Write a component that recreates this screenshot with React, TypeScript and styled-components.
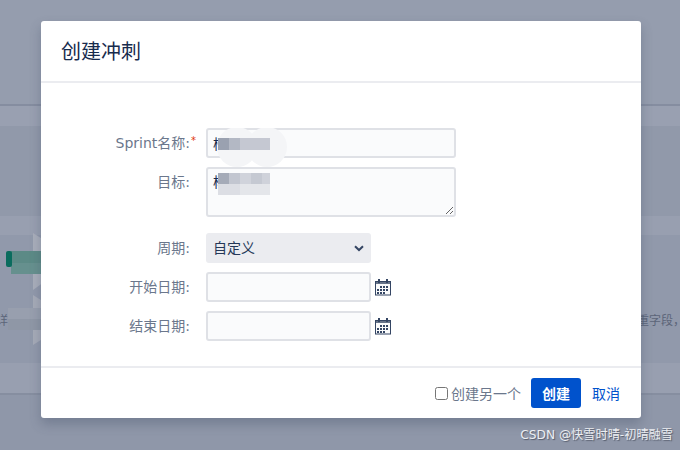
import React from "react";
import styled, { createGlobalStyle } from "styled-components";

const FONT = `"DejaVu Sans", "Noto Sans CJK SC", sans-serif`;

const Global = createGlobalStyle`
  html, body { margin: 0; padding: 0; width: 680px; height: 450px; overflow: hidden; background: #9199ab; }
  * { box-sizing: border-box; }
`;

const Page = styled.div`
  position: relative;
  width: 680px;
  height: 450px;
  overflow: hidden;
  font-family: ${FONT};
`;

const Backdrop = styled.div`
  display: flex;
  flex-direction: column;
  width: 100%;
  height: 100%;
`;

const Band = styled.div<{ $h: number; $tone: string; $line?: string }>`
  height: ${(p) => p.$h}px;
  flex: none;
  background: ${(p) => p.$tone};
  ${(p) => (p.$line ? `border-bottom: 2px solid ${p.$line};` : "")}
`;

const TextBand = styled(Band)`
  display: flex;
  justify-content: space-between;
  padding-top: 78px;
  font-size: 12px;
  line-height: 16px;
  color: #5c6579;
`;

const ClippedLeft = styled.span`
  margin-left: -4px;
`;

const ClippedRight = styled.span`
  margin-right: -5px;
`;

const Smudges = styled.svg`
  position: absolute;
  left: 0;
  top: 230px;
`;

const Modal = styled.div`
  position: absolute;
  left: 41px;
  top: 21px;
  width: 600px;
  height: 397px;
  display: flex;
  flex-direction: column;
  background: #fff;
  border-radius: 3px;
  box-shadow: 0 6px 12px rgba(60, 70, 95, 0.32);
`;

const Header = styled.header`
  height: 62px;
  flex: none;
  display: flex;
  align-items: center;
  padding: 0 20px;
  border-bottom: 2px solid #ebecf0;
  margin: 0;
`;

const Title = styled.h2`
  margin: 0;
  font-size: 20px;
  font-weight: 400;
  color: #172b4d;
  line-height: 28px;
  position: relative;
  top: 1px;
`;

const Form = styled.div`
  flex: 1;
  display: flex;
  flex-direction: column;
  padding-top: 45px;
`;

const Row = styled.div<{ $after: number }>`
  display: flex;
  align-items: flex-start;
  margin-bottom: ${(p) => p.$after}px;
`;

const Label = styled.label`
  width: 149px;
  flex: none;
  margin-right: 16px;
  text-align: right;
  font-size: 14px;
  line-height: 30px;
  color: #6b778c;
  position: relative;
`;

const Star = styled.span`
  position: absolute;
  left: 150px;
  top: -2px;
  font-size: 10px;
  color: #de350b;
`;

const fieldBase = `
  border: 2px solid #dfe1e6;
  border-radius: 3px;
  background: #fafbfc;
  font-family: ${FONT};
  font-size: 14px;
  color: #172b4d;
  padding: 0 5px;
  outline: none;
`;

const TextInput = styled.input<{ $w: number }>`
  ${fieldBase}
  width: ${(p) => p.$w}px;
  height: 30px;
`;

const TextArea = styled.textarea`
  ${fieldBase}
  width: 250px;
  height: 50px;
  padding-top: 3px;
  display: block;
  line-height: 20px;
`;

const SelectWrap = styled.div`
  position: relative;
  width: 165px;
  height: 30px;
`;

const Select = styled.select`
  appearance: none;
  display: block;
  width: 100%;
  height: 100%;
  border: none;
  border-radius: 3px;
  background-color: #ebecf0;
  font-family: ${FONT};
  font-size: 14px;
  color: #253858;
  padding: 0 7px;
`;

const Chevron = styled.svg`
  position: absolute;
  left: 148px;
  top: 12px;
  pointer-events: none;
`;

const DateIcon = styled.svg`
  flex: none;
  margin: 7px 0 0 4px;
`;

const Censor = styled.svg`
  position: absolute;
  left: 172px;
  top: 107px;
  pointer-events: none;
`;

const Footer = styled.footer`
  height: 52px;
  flex: none;
  border-top: 2px solid #ebecf0;
  display: flex;
  align-items: center;
  justify-content: flex-end;
  padding: 0 21px 0 0;
`;

const CheckLabel = styled.label`
  display: flex;
  align-items: center;
  font-size: 14px;
  color: #6b778c;
  margin-right: 10px;
`;

const Check = styled.input`
  width: 13px;
  height: 13px;
  margin: 0 3px 0 0;
`;

const Primary = styled.button`
  width: 50px;
  height: 30px;
  border: none;
  border-radius: 3px;
  background: #0052cc;
  color: #fff;
  font-family: ${FONT};
  font-size: 14px;
  font-weight: 700;
  padding: 0;
`;

const LinkButton = styled.a`
  margin-left: 11px;
  font-size: 14px;
  color: #0052cc;
  text-decoration: none;
`;

const Watermark = styled.div`
  position: absolute;
  right: 7px;
  top: 426px;
  font-size: 12.2px;
  line-height: 18px;
  color: #eceef2;
  text-shadow: 1px 1px 1px rgba(60, 65, 80, 0.7);
  white-space: nowrap;
`;

const Calendar = () => (
  <DateIcon width="17" height="17" viewBox="0 0 17 17" aria-hidden="true">
    <rect x="0.5" y="2.5" width="15" height="13.5" fill="#fafbfc" stroke="#344563" />
    <rect x="0" y="2" width="16" height="3" fill="#344563" opacity="0.75" />
    <rect x="3" y="0" width="2" height="4" fill="#344563" />
    <rect x="11" y="0" width="2" height="4" fill="#344563" />
    <g fill="#344563">
      <rect x="5" y="7" width="2" height="2" />
      <rect x="8" y="7" width="2" height="2" />
      <rect x="11" y="7" width="2" height="2" />
      <rect x="2" y="10" width="2" height="2" />
      <rect x="5" y="10" width="2" height="2" />
      <rect x="8" y="10" width="2" height="2" />
      <rect x="11" y="10" width="2" height="2" />
      <rect x="2" y="13" width="2" height="2" />
      <rect x="5" y="13" width="2" height="2" />
      <rect x="8" y="13" width="2" height="2" />
    </g>
  </DateIcon>
);

export default function App() {
  return (
    <Page>
      <Global />
      <Backdrop>
        <Band $h={106} $tone="#959dae" $line="#858da0" />
        <Band $h={20} $tone="#99a0b1" />
        <Band $h={90} $tone="#9199aa" />
        <Band $h={19} $tone="#989fb0" />
        <TextBand $h={128} $tone="#9199ab">
          <ClippedLeft>详</ClippedLeft>
          <ClippedRight>重字段，</ClippedRight>
        </TextBand>
        <Band $h={32} $tone="#989fb0" $line="#868ea0" />
        <Band $h={55} $tone="#8f97a9" />
      </Backdrop>

      <Smudges width="44" height="115" viewBox="0 0 44 115" aria-hidden="true">
        <polygon points="33,3 44,10 44,52 33,60" fill="#a9aebb" />
        <polygon points="33,65 44,72 44,108 33,115" fill="#a6abb8" />
        <rect x="8" y="78" width="36" height="11" fill="#989fae" />
        <rect x="8" y="89" width="36" height="11" fill="#8f97a6" />
        <rect x="11" y="21" width="33" height="12" fill="#5c8a86" />
        <rect x="11" y="33" width="33" height="11" fill="#66908e" />
        <rect x="6" y="21" width="6" height="16" rx="2" fill="#0a6c5e" />
      </Smudges>

      <Modal>
        <Header>
          <Title>创建冲刺</Title>
        </Header>
        <Form>
          <Row $after={9}>
            <Label>
              Sprint名称:<Star>*</Star>
            </Label>
            <TextInput $w={250} defaultValue="杨" />
          </Row>
          <Row $after={16}>
            <Label>目标:</Label>
            <TextArea defaultValue="杨" />
          </Row>
          <Row $after={9}>
            <Label>周期:</Label>
            <SelectWrap>
              <Select defaultValue="custom">
                <option value="custom">自定义</option>
              </Select>
              <Chevron width="10" height="7" viewBox="0 0 10 7" aria-hidden="true">
                <path d="M1 1.2 L5 5 L9 1.2" fill="none" stroke="#344563" strokeWidth="2" />
              </Chevron>
            </SelectWrap>
          </Row>
          <Row $after={9}>
            <Label>开始日期:</Label>
            <TextInput $w={165} />
            <Calendar />
          </Row>
          <Row $after={0}>
            <Label>结束日期:</Label>
            <TextInput $w={165} />
            <Calendar />
          </Row>
        </Form>
        <Footer>
          <CheckLabel>
            <Check type="checkbox" />
            创建另一个
          </CheckLabel>
          <Primary type="button">创建</Primary>
          <LinkButton href="#">取消</LinkButton>
        </Footer>
        <Censor width="80" height="70" viewBox="0 0 80 70" aria-hidden="true">
          <circle cx="24" cy="19" r="20" fill="#f4f5f7" />
          <circle cx="54" cy="19" r="20" fill="#f4f5f7" />
          <rect x="5" y="10" width="11" height="12" fill="#9aa1b0" />
          <rect x="16" y="10" width="11" height="12" fill="#b3b8c4" />
          <rect x="27" y="10" width="30" height="12" fill="#c5c8d2" />
          <rect x="5" y="45" width="11" height="11" fill="#a5abb8" />
          <rect x="16" y="45" width="11" height="11" fill="#c2c6d0" />
          <rect x="27" y="45" width="11" height="11" fill="#d0d3db" />
          <rect x="38" y="45" width="11" height="11" fill="#c5c9d2" />
          <rect x="49" y="45" width="8" height="11" fill="#cfd2da" />
          <rect x="5" y="56" width="22" height="11" fill="#dcdee4" />
          <rect x="27" y="56" width="30" height="11" fill="#e4e6ea" />
        </Censor>
      </Modal>
      <Watermark>CSDN @快雪时晴-初晴融雪</Watermark>
    </Page>
  );
}
